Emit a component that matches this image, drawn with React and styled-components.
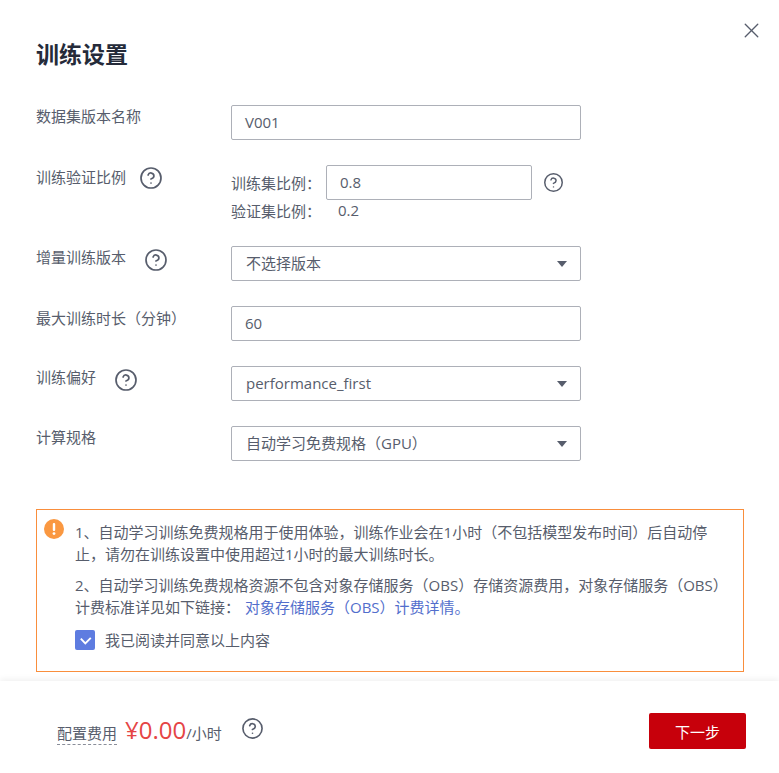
import React from "react";
import styled, { createGlobalStyle } from "styled-components";
import { CircleHelp, X } from "lucide-react";

const GlobalStyle = createGlobalStyle`
  html, body {
    margin: 0;
    padding: 0;
    background: #fff;
  }
  body {
    font-family: "Open Sans", "Noto Sans CJK SC", sans-serif;
    font-size: 15px;
    color: #575d6c;
  }
`;

const Page = styled.div`
  position: relative;
  width: 779px;
  height: 773px;
  overflow: hidden;
  display: flex;
  flex-direction: column;
`;

const Body = styled.div`
  flex: 1;
  padding: 39px 35px 0 36px;
`;

const CloseButton = styled.div`
  position: absolute;
  top: 18px;
  left: 739px;
  color: #575d6c;
  line-height: 0;
`;

const Title = styled.h1`
  margin: 0 0 36px;
  font-size: 23px;
  line-height: 30px;
  font-weight: 700;
  color: #252b3a;
`;

const Form = styled.div`
  display: flex;
  flex-direction: column;
  gap: 25px;
`;

const Row = styled.div`
  display: grid;
  grid-template-columns: 195px 350px;
`;

const Label = styled.div`
  display: flex;
  align-items: flex-start;
  gap: ${p => p.$gap || 14}px;
  line-height: 22px;
  padding-top: ${p => p.$top || 0}px;
  color: #575d6c;
`;

const HelpIcon = styled(CircleHelp)`
  flex: none;
  color: #575d6c;
  margin-top: ${p => p.$top || 0}px;
`;

const Field = styled.div`
  box-sizing: border-box;
  height: 35px;
  width: ${p => p.$width || "100%"};
  padding: 0 ${p => (p.$select ? 14 : 13)}px;
  display: flex;
  align-items: center;
  justify-content: space-between;
  border: 1px solid #adb0b8;
  border-radius: 2px;
  background: #fff;
  color: #575d6c;
  line-height: 1;
`;

const Caret = styled.span`
  width: 0;
  height: 0;
  margin-right: -1px;
  border-left: 5px solid transparent;
  border-right: 5px solid transparent;
  border-top: 6px solid #575d6c;
`;

const RatioRow = styled.div`
  display: flex;
  align-items: center;
`;

const RatioLabel = styled.span`
  width: 95px;
  flex: none;
`;

const RatioValue = styled.span`
  padding-left: 12px;
  line-height: 21px;
`;

const RatioHelp = styled.span`
  margin-left: 11px;
  line-height: 0;
`;

const Notice = styled.div`
  box-sizing: border-box;
  position: relative;
  margin-top: 48px;
  width: 708px;
  height: 163px;
  padding: 11px 20px 0 38px;
  border: 1px solid #f98e3c;
  line-height: 22px;
  color: #575d6c;
`;

const NoticeIcon = styled.svg`
  position: absolute;
  top: 9px;
  left: 7px;
`;

const Para = styled.p`
  margin: 0 0 9px;
`;

const Link = styled.a`
  color: #526ecc;
  margin-left: 5px;
`;

const Agree = styled.label`
  display: flex;
  align-items: center;
  gap: 10px;
  margin-top: 11px;
`;

const CheckBox = styled.span`
  width: 20px;
  height: 20px;
  border-radius: 2px;
  background: #5e7ce0;
  line-height: 0;
`;

const Footer = styled.div`
  box-sizing: border-box;
  height: 92px;
  flex: none;
  display: flex;
  align-items: center;
  justify-content: space-between;
  padding: 8px 33px 0 57px;
  background: #fff;
  box-shadow: 0 -2px 6px rgba(0, 0, 0, 0.06);
`;

const Price = styled.div`
  display: flex;
  align-items: baseline;
  margin-bottom: 2px;
`;

const PriceLabel = styled.span`
  border-bottom: 1px dashed #8a8e99;
  line-height: 22px;
  margin-right: 8px;
`;

const Amount = styled.span`
  font-size: 24px;
  line-height: 32px;
  color: #e54545;
`;

const Unit = styled.span`
  color: #575d6c;
`;

const FooterHelp = styled(HelpIcon)`
  margin-left: 19px;
  align-self: center;
  margin-top: -3px;
`;

const NextButton = styled.button`
  width: 97px;
  height: 36px;
  border: none;
  border-radius: 2px;
  background: #c7000b;
  color: #fff;
  font: inherit;
  padding: 0;
`;

const Help = ({ size = 24, top }) => <HelpIcon size={size} strokeWidth={1.7} $top={top} />;

export default function App() {
  return (
    <Page>
      <GlobalStyle />
      <CloseButton><X size={25} strokeWidth={1.3} /></CloseButton>
      <Body>
        <Title>训练设置</Title>
        <Form>
          <Row>
            <Label>数据集版本名称</Label>
            <Field>V001</Field>
          </Row>
          <Row>
            <Label $gap={13} $top={1}>训练验证比例 <Help top={0} /></Label>
            <div>
              <RatioRow>
                <RatioLabel>训练集比例：</RatioLabel>
                <Field $width="206px">0.8</Field>
                <RatioHelp><Help size={21} /></RatioHelp>
              </RatioRow>
              <RatioRow>
                <RatioLabel>验证集比例：</RatioLabel>
                <RatioValue>0.2</RatioValue>
              </RatioRow>
            </div>
          </Row>
          <Row>
            <Label $gap={18}>增量训练版本 <Help top={2} /></Label>
            <Field $select>不选择版本<Caret /></Field>
          </Row>
          <Row>
            <Label $top={1}>最大训练时长（分钟）</Label>
            <Field>60</Field>
          </Row>
          <Row>
            <Label $gap={18}>训练偏好 <Help top={2} /></Label>
            <Field $select>performance_first<Caret /></Field>
          </Row>
          <Row>
            <Label>计算规格</Label>
            <Field $select>自动学习免费规格（GPU）<Caret /></Field>
          </Row>
        </Form>
        <Notice>
          <NoticeIcon width="20" height="20" viewBox="0 0 20 20">
            <circle cx="10" cy="10" r="10" fill="#fa9841" />
            <rect x="8.8" y="4" width="2.4" height="8" rx="1" fill="#fff" />
            <circle cx="10" cy="14.6" r="1.4" fill="#fff" />
          </NoticeIcon>
          <Para>1、自动学习训练免费规格用于使用体验，训练作业会在1小时（不包括模型发布时间）后自动停止，请勿在训练设置中使用超过1小时的最大训练时长。</Para>
          <Para>2、自动学习训练免费规格资源不包含对象存储服务（OBS）存储资源费用，对象存储服务（OBS）计费标准详见如下链接：<Link>对象存储服务（OBS）计费详情。</Link></Para>
          <Agree>
            <CheckBox>
              <svg width="20" height="20" viewBox="0 0 20 20" fill="none">
                <path d="M5.8 8.6 L10.3 13.4 L15.8 7.8" stroke="#fff" strokeWidth="1.9" />
              </svg>
            </CheckBox>
            我已阅读并同意以上内容
          </Agree>
        </Notice>
      </Body>
      <Footer>
        <Price>
          <PriceLabel>配置费用</PriceLabel>
          <Amount>¥0.00</Amount>
          <Unit>/小时</Unit>
          <FooterHelp size={23} strokeWidth={1.7} />
        </Price>
        <NextButton>下一步</NextButton>
      </Footer>
    </Page>
  );
}
